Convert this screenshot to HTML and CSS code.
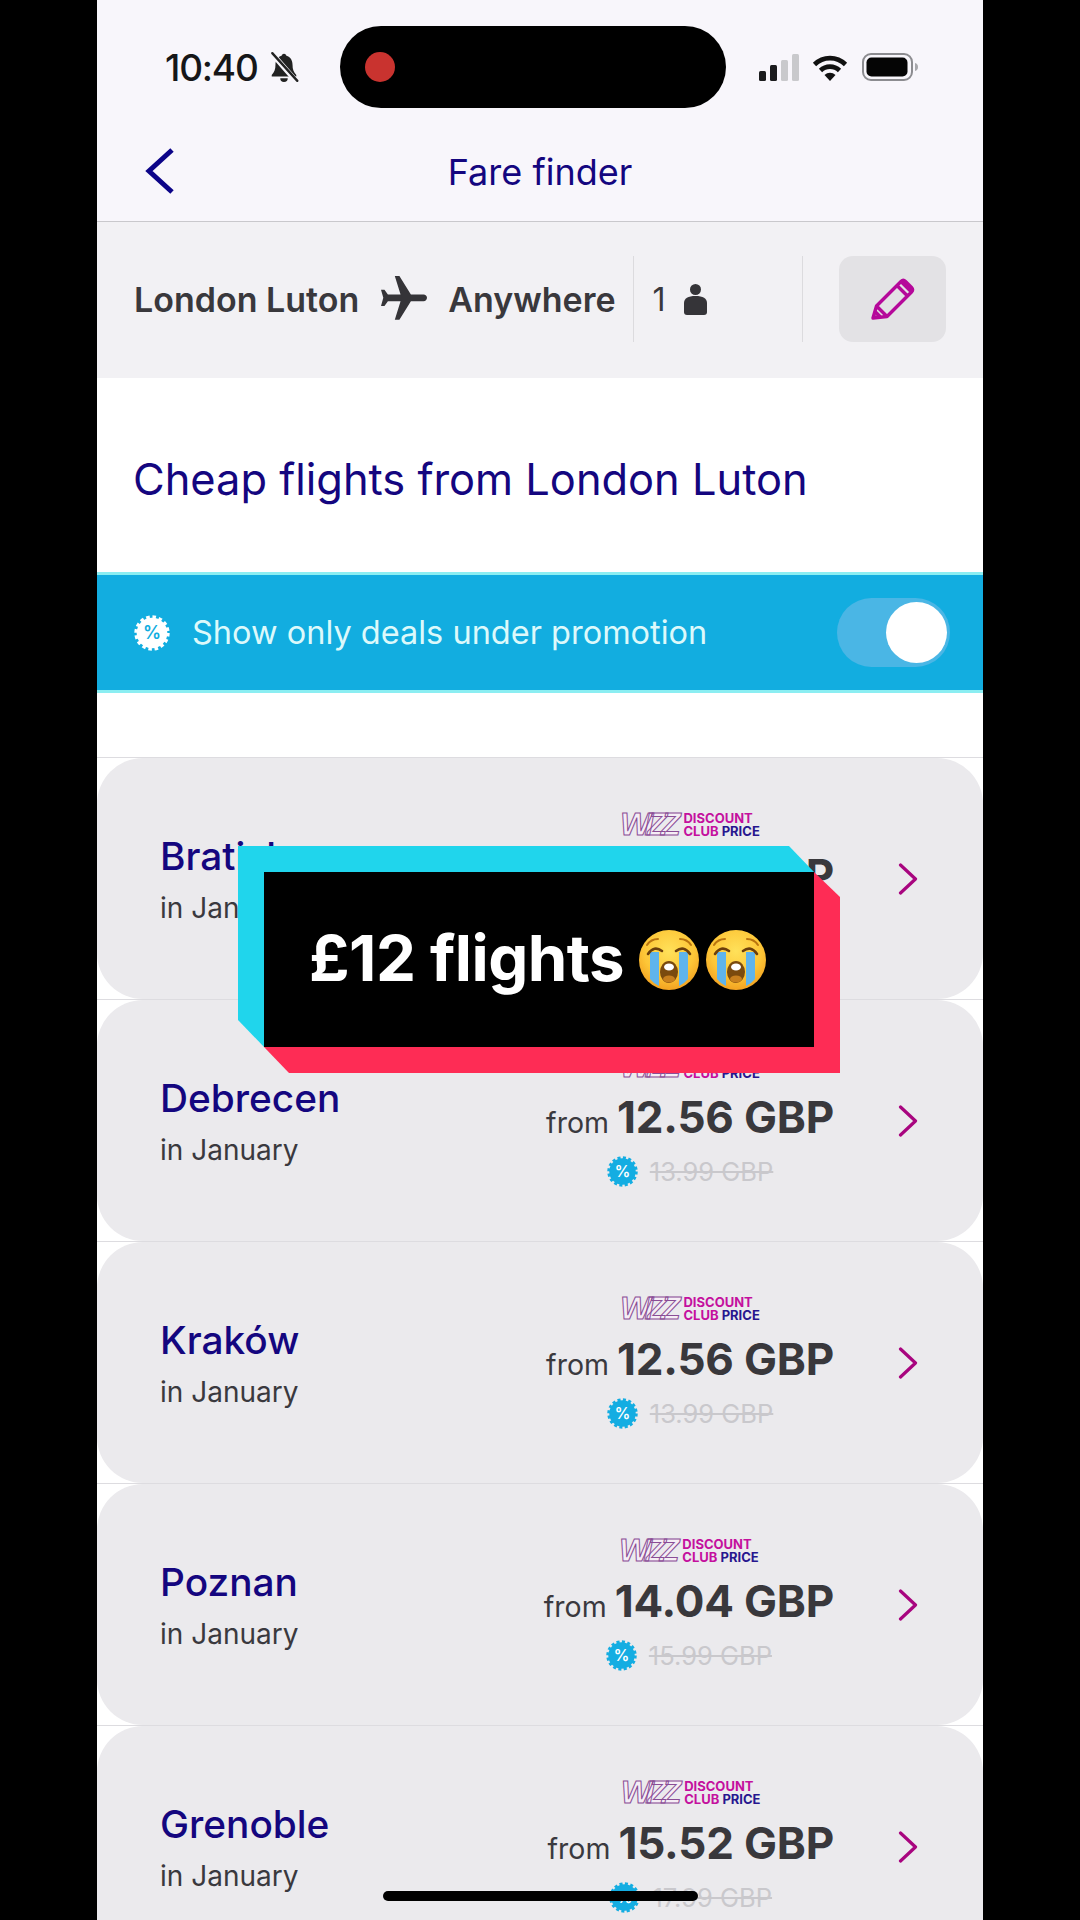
FILE: index.html
```html
<!DOCTYPE html>
<html lang="en">
<head>
<meta charset="utf-8">
<title>Fare finder</title>
<link rel="stylesheet" href="styles.css">
</head>
<body>
<svg class="defs" width="0" height="0" aria-hidden="true">
  <defs>
    <radialGradient id="face" cx="50%" cy="35%" r="70%">
      <stop offset="0" stop-color="#ffe15a"/>
      <stop offset="0.6" stop-color="#fdc637"/>
      <stop offset="1" stop-color="#f09a1c"/>
    </radialGradient>
    <symbol id="cry" viewBox="0 0 60 60">
      <circle cx="30" cy="30" r="30" fill="url(#face)"/>
      <path d="M11 22H20V56Q14 53 11 49Z" fill="#5fb4ec"/>
      <path d="M40 22H49V49Q46 53 40 56Z" fill="#5fb4ec"/>
      <path d="M9 24Q15 15 23 21M37 21Q45 15 51 24" fill="none" stroke="#6b3f0c" stroke-width="2.6" stroke-linecap="round"/>
      <path d="M8 15Q12 9 19 9M41 9Q48 9 52 15" fill="none" stroke="#b9740f" stroke-width="2" stroke-linecap="round"/>
      <ellipse cx="30" cy="42" rx="9" ry="11" fill="#7a4a0e"/>
      <ellipse cx="30" cy="37" rx="5" ry="3.500" fill="#fff"/>
      <ellipse cx="30" cy="49" rx="6" ry="3.500" fill="#c77f1e"/>
    </symbol>
    <symbol id="chev" viewBox="0 0 20 32">
      <path d="M2.500 2 17.500 16 2.500 30" fill="none" stroke="#a8057f" stroke-width="3.200" stroke-linecap="round" stroke-linejoin="round"/>
    </symbol>
    <symbol id="badge" viewBox="0 0 34 34">
      <circle cx="17" cy="17" r="14.500" fill="#14ade2"/>
      <circle cx="17" cy="17" r="15" fill="none" stroke="#14ade2" stroke-width="3.400" stroke-dasharray="3.300 2.590"/>
    </symbol>
  </defs>
</svg>

<main class="screen">
  <header class="status">
    <div class="status-left">
      <span class="time">10:40</span>
      <svg class="bell" viewBox="0 0 30 30"><path d="M15 2.500c-1.300 0-2.200.900-2.200 2C8.800 5.600 7 9 7 13c0 4.500-1 7-3.500 9.500V24h23v-1.500C24 20 23 17.500 23 13c0-4-1.800-7.400-5.800-8.500 0-1.100-.9-2-2.200-2zM11.500 25.500a3.500 3.500 0 0 0 7 0z" fill="#222"/><path d="M3.500 2 27 29" stroke="#f8f6fb" stroke-width="5"/><path d="M4 2 27.500 28" stroke="#222" stroke-width="2.200" stroke-linecap="round"/></svg>
    </div>
    <div class="island"><span class="rec"></span></div>
    <div class="status-right">
      <svg class="signal" viewBox="0 0 41 27"><rect x="0" y="17" width="7" height="10" rx="1.500" fill="#1b1b1d"/><rect x="11" y="11" width="7" height="16" rx="1.500" fill="#1b1b1d"/><rect x="22" y="6" width="7" height="21" rx="1.500" fill="#c9c9cc"/><rect x="33" y="0" width="7" height="27" rx="1.500" fill="#c9c9cc"/></svg>
      <svg class="wifi" viewBox="0 0 36 27"><path d="M2.500 10.500a22 22 0 0 1 31 0" fill="none" stroke="#111" stroke-width="4.600"/><path d="M8.500 16.500a13.500 13.500 0 0 1 19 0" fill="none" stroke="#111" stroke-width="4.600"/><path d="M12.500 21 18 27l5.500-6a8 8 0 0 0-11 0z" fill="#111"/></svg>
      <svg class="battery" viewBox="0 0 56 28"><rect x="1" y="1" width="49" height="26" rx="8" fill="none" stroke="#8c8c90" stroke-width="2"/><rect x="4.500" y="4.500" width="41" height="19" rx="5" fill="#050505"/><path d="M53 10c2 .5 3 2 3 4s-1 3.500-3 4z" fill="#a8a8ac"/></svg>
    </div>
  </header>

  <nav class="nav">
    <svg class="back" viewBox="0 0 29 46"><path d="M27 2 4 23 27 44" fill="none" stroke="#0c0488" stroke-width="5"/></svg>
    <h1 class="nav-title">Fare finder</h1>
  </nav>

  <section class="route">
    <span class="place">London Luton</span>
    <svg class="plane" viewBox="2 2 20 20"><path transform="rotate(90 12 12)" d="M21 16v-2l-8-5V3.500c0-.83-.67-1.500-1.500-1.500S10 2.670 10 3.500V9l-8 5v2l8-2.500V19l-2 1.500V22l3.500-1 3.500 1v-1.500L13 19v-5.500l8 2.500z" fill="#353438"/></svg>
    <span class="place">Anywhere</span>
    <div class="pax">
      <span class="pax-count">1</span>
      <svg class="person" viewBox="0 0 23 31"><circle cx="11.500" cy="5.500" r="5.500" fill="#353438"/><path d="M0 19c0-4.500 4-7 11.500-7S23 14.500 23 19v9c0 2-1 3-3 3H3c-2 0-3-1-3-3z" fill="#353438"/></svg>
    </div>
    <div class="edit">
      <svg class="pencil" viewBox="0 0 45 44"><path d="M3 41 6.500 29 31 4.500c1.500-1.500 3-1.500 4.500 0l6 6c1.500 1.500 1.500 3 0 4.500L17 39.500zM6.500 29l10.500 10.500M27 8.500 37.500 19M31 4.500 41.500 15M3 41l6.500-2-4.500-4.500" fill="none" stroke="#b5089a" stroke-width="3.400" stroke-linejoin="round"/></svg>
    </div>
  </section>

  <section class="heading">
    <h2 class="heading-text">Cheap flights from London Luton</h2>
  </section>

  <section class="promo">
    <svg class="promo-badge" viewBox="0 0 34 34">
      <circle cx="17" cy="17" r="14.500" fill="#fff"/>
      <circle cx="17" cy="17" r="15" fill="none" stroke="#fff" stroke-width="3.400" stroke-dasharray="3.300 2.590"/>
      <text x="17" y="23" text-anchor="middle" class="pct pct-blue">%</text>
    </svg>
    <span class="promo-text">Show only deals under promotion</span>
    <div class="toggle"><span class="knob"></span></div>
  </section>

  <div class="spacer"></div>

  <ul class="list">
    <li class="row"><article class="card">
      <div class="dest"><span class="dest-name">Bratislava</span><span class="dest-when">in January</span></div>
      <div class="fare">
        <div class="club"><span class="club-wizz">WIZZ</span><span class="club-text"><span class="club-line">DISCOUNT</span><span class="club-line">CLUB <b class="club-price">PRICE</b></span></span></div>
        <div class="price"><span class="from">from</span><span class="amount">12.56 GBP</span></div>
        <div class="old"><svg class="old-badge" viewBox="0 0 34 34"><use href="#badge"/><text x="17" y="23" text-anchor="middle" class="pct">%</text></svg><s class="old-amount">13.99 GBP</s></div>
      </div>
      <svg class="go"><use href="#chev"/></svg>
    </article></li>
    <li class="row"><article class="card">
      <div class="dest"><span class="dest-name">Debrecen</span><span class="dest-when">in January</span></div>
      <div class="fare">
        <div class="club"><span class="club-wizz">WIZZ</span><span class="club-text"><span class="club-line">DISCOUNT</span><span class="club-line">CLUB <b class="club-price">PRICE</b></span></span></div>
        <div class="price"><span class="from">from</span><span class="amount">12.56 GBP</span></div>
        <div class="old"><svg class="old-badge" viewBox="0 0 34 34"><use href="#badge"/><text x="17" y="23" text-anchor="middle" class="pct">%</text></svg><s class="old-amount">13.99 GBP</s></div>
      </div>
      <svg class="go"><use href="#chev"/></svg>
    </article></li>
    <li class="row"><article class="card">
      <div class="dest"><span class="dest-name">Kraków</span><span class="dest-when">in January</span></div>
      <div class="fare">
        <div class="club"><span class="club-wizz">WIZZ</span><span class="club-text"><span class="club-line">DISCOUNT</span><span class="club-line">CLUB <b class="club-price">PRICE</b></span></span></div>
        <div class="price"><span class="from">from</span><span class="amount">12.56 GBP</span></div>
        <div class="old"><svg class="old-badge" viewBox="0 0 34 34"><use href="#badge"/><text x="17" y="23" text-anchor="middle" class="pct">%</text></svg><s class="old-amount">13.99 GBP</s></div>
      </div>
      <svg class="go"><use href="#chev"/></svg>
    </article></li>
    <li class="row"><article class="card">
      <div class="dest"><span class="dest-name">Poznan</span><span class="dest-when">in January</span></div>
      <div class="fare">
        <div class="club"><span class="club-wizz">WIZZ</span><span class="club-text"><span class="club-line">DISCOUNT</span><span class="club-line">CLUB <b class="club-price">PRICE</b></span></span></div>
        <div class="price"><span class="from">from</span><span class="amount">14.04 GBP</span></div>
        <div class="old"><svg class="old-badge" viewBox="0 0 34 34"><use href="#badge"/><text x="17" y="23" text-anchor="middle" class="pct">%</text></svg><s class="old-amount">15.99 GBP</s></div>
      </div>
      <svg class="go"><use href="#chev"/></svg>
    </article></li>
    <li class="row"><article class="card">
      <div class="dest"><span class="dest-name">Grenoble</span><span class="dest-when">in January</span></div>
      <div class="fare">
        <div class="club"><span class="club-wizz">WIZZ</span><span class="club-text"><span class="club-line">DISCOUNT</span><span class="club-line">CLUB <b class="club-price">PRICE</b></span></span></div>
        <div class="price"><span class="from">from</span><span class="amount">15.52 GBP</span></div>
        <div class="old"><svg class="old-badge" viewBox="0 0 34 34"><use href="#badge"/><text x="17" y="23" text-anchor="middle" class="pct">%</text></svg><s class="old-amount">17.99 GBP</s></div>
      </div>
      <svg class="go"><use href="#chev"/></svg>
    </article></li>
  </ul>

  <div class="caption">
    <span class="caption-cyan"></span>
    <span class="caption-red"></span>
    <div class="caption-box">
      <span class="caption-text">£12 flights</span>
      <svg class="emoji"><use href="#cry"/></svg>
      <svg class="emoji"><use href="#cry"/></svg>
    </div>
  </div>

  <div class="home"></div>
</main>
</body>
</html>
```
FILE: styles.css
```css
* { box-sizing: border-box; }
html, body { margin: 0; padding: 0; }
body { background: #000; font-family: Inter, "Liberation Sans", sans-serif; }
.defs { display: block; height: 0; }

.screen { position: relative; width: 886px; height: 1920px; margin: 0 auto; overflow: hidden; background: #fff; }

/* status bar */
.status { display: flex; align-items: center; height: 134px; padding-left: 68px; background: #f8f6fb; }
.status-left { display: flex; align-items: center; gap: 10px; width: 137px; }
.time { font-size: 37px; font-weight: 500; letter-spacing: -1.200px; color: #161618; line-height: 1; }
.bell { width: 32px; height: 32px; }
.island { display: flex; align-items: center; width: 386px; height: 82px; margin-left: 38px; padding-left: 25px; border-radius: 41px; background: #000; }
.rec { width: 30px; height: 30px; border-radius: 50%; background: #c9332f; }
.status-right { display: flex; align-items: center; margin-left: 33px; }
.signal { width: 41px; height: 27px; }
.wifi { width: 36px; height: 27px; margin-left: 12px; }
.battery { width: 56px; height: 28px; margin-left: 14px; }

/* nav */
.nav { display: flex; align-items: center; justify-content: center; position: relative; height: 88px; padding-bottom: 12px; background: #f8f6fb; border-bottom: 1px solid #c9c8cc; }
.back { position: absolute; left: 48px; top: 14px; width: 29px; height: 46px; }
.nav-title { margin: 0; font-size: 36px; font-weight: 400; color: #14067f; line-height: 1; }

/* route */
.route { display: flex; align-items: center; height: 156px; padding: 0 0 2px 37px; background: #f2f1f4; }
.place { font-size: 34px; font-weight: 600; color: #39383c; white-space: nowrap; }
.plane { width: 46px; height: 46px; margin: 0 21px 0 22px; }
.pax { display: flex; align-items: center; width: 170px; height: 86px; margin-left: 17px; padding-left: 19px; border-left: 1px solid #dcdbde; border-right: 1px solid #dcdbde; }
.pax-count { font-size: 32px; color: #39383c; }
.person { width: 23px; height: 31px; margin-left: 18px; }
.edit { display: flex; align-items: center; justify-content: center; width: 107px; height: 86px; margin-left: 36px; border-radius: 14px; background: #e3e2e5; }
.pencil { width: 45px; height: 44px; }

/* heading */
.heading { display: flex; align-items: center; height: 194px; padding: 7px 0 0 36px; background: #fff; }
.heading-text { margin: 0; font-size: 43.400px; font-weight: 400; color: #14067f; white-space: nowrap; }

/* promo */
.promo { display: flex; align-items: center; height: 121px; padding: 0 33px 0 37px; background: #12ade0; border-top: 3px solid #8beef2; border-bottom: 3px solid #8beef2; }
.promo-badge { width: 36px; height: 36px; flex: none; }
.pct { font-family: Inter, "Liberation Sans", sans-serif; font-size: 17px; font-weight: 600; fill: #fff; }
.pct-blue { fill: #12ade0; }
.promo-text { margin-left: 22px; font-size: 32.500px; color: #dcf9fb; white-space: nowrap; }
.toggle { display: flex; align-items: center; justify-content: flex-end; width: 113px; height: 69px; margin-left: auto; padding-right: 3px; border-radius: 35px; background: #4ab6e5; }
.knob { width: 61px; height: 61px; border-radius: 50%; background: #fff; }

.spacer { height: 64px; background: #fff; }

/* fares */
.list { margin: 0; padding: 0; list-style: none; }
.row { height: 242px; border-top: 1px solid #dddce0; background: #fff; }
.card { display: flex; align-items: center; height: 241px; padding: 0 65px 0 63px; border-radius: 46px; background: #ebeaed; }
.dest { display: flex; flex-direction: column; gap: 11px; margin-top: 1px; }
.dest-name { font-size: 38.800px; font-weight: 500; line-height: 46px; color: #14067f; }
.dest-when { font-size: 28px; line-height: 36px; color: #3a393e; }
.fare { display: flex; flex-direction: column; align-items: center; margin-left: auto; }
.club { display: flex; align-items: center; gap: 3px; height: 27px; }
.club-wizz { font-family: "Liberation Sans", sans-serif; font-size: 32px; font-style: italic; font-weight: 700; letter-spacing: -6px; line-height: 27px; padding-right: 6px; color: #f5edf5; -webkit-text-stroke: 1px #8a4d96; }
.club-text { display: flex; flex-direction: column; padding-top: 2px; }
.club-line { font-size: 13px; font-weight: 700; line-height: 13px; color: #c4109e; white-space: nowrap; }
.club-price { color: #27168f; font-weight: 700; }
.price { display: flex; align-items: baseline; gap: 8px; height: 44px; margin-top: 15px; line-height: 44px; }
.from { font-size: 28.500px; color: #3a393e; }
.amount { font-size: 44px; font-weight: 700; letter-spacing: -0.200px; color: #39383c; white-space: nowrap; }
.old { display: flex; align-items: center; gap: 12px; height: 34px; margin-top: 16px; }
.old-badge { width: 31px; height: 31px; }
.old-amount { font-size: 25.500px; color: #c9c8cc; white-space: nowrap; }
.go { width: 20px; height: 32px; margin-left: 64px; flex: none; }

/* caption overlay */
.caption { position: absolute; left: 141px; top: 846px; width: 602px; height: 227px; }
.caption-cyan { position: absolute; left: 0; top: 0; width: 576px; height: 201px; background: #20d5ec; clip-path: polygon(0 0, 551px 0, 100% 26px, 100% 100%, 26px 100%, 0 174px); }
.caption-red { position: absolute; right: 0; bottom: 0; width: 576px; height: 201px; background: #fe2c55; clip-path: polygon(0 0, 550px 0, 100% 25px, 100% 100%, 25px 100%, 0 175px); }
.caption-box { position: absolute; left: 26px; top: 26px; width: 550px; height: 175px; display: flex; align-items: center; gap: 7px; padding-left: 45px; background: #000; }
.caption-text { margin: 0 8px 4px 0; font-size: 63.500px; font-weight: 700; letter-spacing: -0.500px; color: #fff; white-space: nowrap; line-height: 1; }
.emoji { width: 60px; height: 60px; flex: none; }

.home { position: absolute; left: 286px; top: 1891px; width: 315px; height: 10px; border-radius: 5px; background: #000; }
```
